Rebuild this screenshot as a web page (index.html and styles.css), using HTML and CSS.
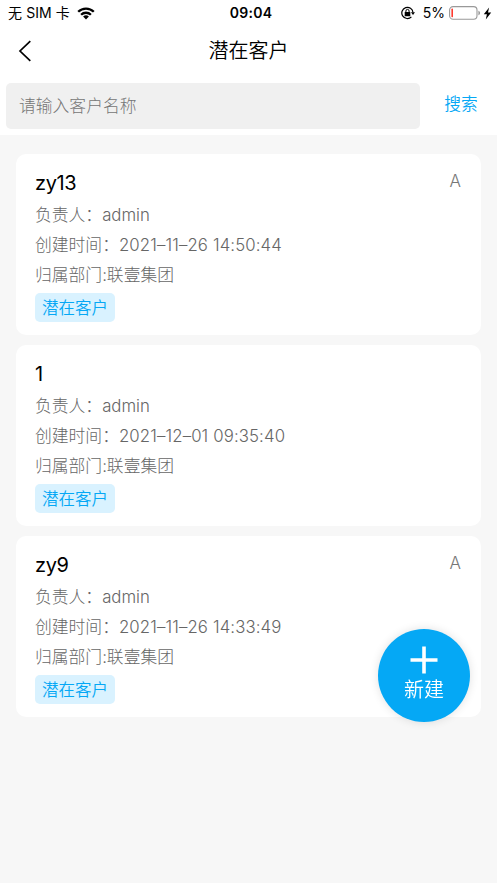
FILE: index.html
```html
<!DOCTYPE html>
<html lang="zh-CN">
  <head>
    <meta charset="UTF-8" />
    <meta name="viewport" content="width=device-width, initial-scale=1.0" />
    <title>潜在客户</title>
    <link rel="stylesheet" href="styles.css">
  </head>
  <body>
    <header class="top">
      <div class="status-bar">
        <div class="status-left">
          <span>无 SIM 卡</span>
          <svg class="wifi" width="18" height="13" viewBox="0 0 18 13">
            <path d="M1.2 4.8a11 11 0 0 1 15.6 0M4.1 7.8a6.9 6.9 0 0 1 9.8 0" fill="none" stroke="#000" stroke-width="2.3" />
            <path d="M9 12.5 6.1 9.6a4.1 4.1 0 0 1 5.8 0z" />
          </svg>
        </div>
        <div class="status-time">09:04</div>
        <div class="status-right">
          <svg width="14" height="14" viewBox="0 0 14 14">
            <path d="M10.4 10.9A5.6 5.6 0 1 1 12 6.5" fill="none" stroke="#000" stroke-width="1.2" />
            <path d="M9.9 6.2h4.1l-2 2.8z" />
            <rect x="3.7" y="6" width="5.6" height="4.2" rx=".5" />
            <path d="M4.9 6.5V5a1.6 1.6 0 0 1 3.2 0v1.5" fill="none" stroke="#000" stroke-width="1" />
          </svg>
          <span class="percent">5%</span>
          <svg class="battery" width="32" height="14" viewBox="0 0 32 14">
            <rect x=".6" y=".6" width="27.4" height="12.6" rx="3.5" fill="none" stroke="#999" stroke-width="1.1" />
            <rect x="2.4" y="2.6" width="1.6" height="8.6" rx=".6" fill="#ff3b30" />
            <path d="M29.4 4.7c2.2.7 2.2 3.8 0 4.5z" fill="#999" />
          </svg>
          <svg width="9" height="13" viewBox="0 0 9 13">
            <path d="M6.1.4.8 7.2h3.1l-1.1 5.4 5.4-7H5z" />
          </svg>
        </div>
      </div>

      <nav class="nav-bar">
        <svg class="back" width="14" height="22" viewBox="0 0 14 22">
          <path d="M12.3 1.2 2 11l10.3 9.8" fill="none" stroke="#000" stroke-width="1.7" />
        </svg>
        <h1>潜在客户</h1>
      </nav>

      <div class="search-bar">
        <input class="search-input" type="text" placeholder="请输入客户名称" />
        <a class="search-btn">搜索</a>
      </div>
    </header>

    <main class="list">
      <section class="card">
        <div class="card-header">
          <h2>zy13</h2>
          <span class="level">A</span>
        </div>
        <p>负责人：<span class="value">admin</span></p>
        <p>创建时间：<span class="value date">2021–11–26 14:50:44</span></p>
        <p>归属部门:联壹集团</p>
        <span class="tag">潜在客户</span>
      </section>

      <section class="card">
        <div class="card-header">
          <h2>1</h2>
        </div>
        <p>负责人：<span class="value">admin</span></p>
        <p>创建时间：<span class="value date">2021–12–01 09:35:40</span></p>
        <p>归属部门:联壹集团</p>
        <span class="tag">潜在客户</span>
      </section>

      <section class="card">
        <div class="card-header">
          <h2>zy9</h2>
          <span class="level">A</span>
        </div>
        <p>负责人：<span class="value">admin</span></p>
        <p>创建时间：<span class="value date">2021–11–26 14:33:49</span></p>
        <p>归属部门:联壹集团</p>
        <span class="tag">潜在客户</span>
      </section>
    </main>

    <button class="add-btn">
      <svg width="28" height="28" viewBox="0 0 28 28">
        <path d="M14 .5v27M.5 14h27" stroke="#fff" stroke-width="3.6" />
      </svg>
      <span>新建</span>
    </button>
  </body>
</html>
```
FILE: styles.css
```css
* {
  box-sizing: border-box;
}
body {
  margin: 0;
  min-height: 883px;
  background: #f7f7f7;
  color: #000;
  font-family: Inter, "Noto Sans CJK SC", sans-serif;
  font-weight: 300;
}
.top {
  height: 135px;
  background: #fff;
}
.status-bar {
  display: grid;
  grid-template-columns: 1fr auto 1fr;
  align-items: center;
  height: 26px;
  padding: 0 5px 0 8px;
  font-size: 14px;
  font-weight: 400;
  line-height: 26px;
}
.status-left,
.status-right {
  display: flex;
  align-items: center;
}
.status-left {
  white-space: nowrap;
  letter-spacing: 0.1px;
}
.wifi {
  margin-left: 7px;
}
.status-time {
  padding-left: 2px;
  font-weight: 600;
  letter-spacing: 0.3px;
}
.status-right {
  justify-content: flex-end;
}
.percent {
  margin: 0 4px 0 8px;
}
.battery {
  margin-right: 2px;
}
.nav-bar {
  display: grid;
  grid-template-columns: 60px 1fr 60px;
  align-items: center;
  height: 50px;
}
.back {
  margin-left: 18px;
}
h1 {
  margin: 0;
  font-size: 20px;
  font-weight: 350;
  line-height: 50px;
  text-align: center;
}
.search-bar {
  display: flex;
  padding: 7px 0 0 6px;
}
.search-input {
  width: 414px;
  height: 46px;
  padding: 0 13px;
  border: none;
  border-radius: 5px;
  background: #f0f0f0;
  font: inherit;
  font-size: 16.8px;
}
.search-input::placeholder {
  color: #757575;
}
.search-btn {
  flex: 1;
  color: #05a8f5;
  font-size: 16.7px;
  font-weight: 350;
  line-height: 42px;
  text-align: center;
  padding-left: 5px;
}
.list {
  display: flex;
  flex-direction: column;
  gap: 10px;
  padding: 19px 16px;
}
.card {
  height: 181px;
  padding: 16px 19px;
  border-radius: 10px;
  background: #fff;
}
.card-header {
  display: flex;
  justify-content: space-between;
  height: 31px;
}
h2 {
  margin: 0;
  font-size: 20px;
  font-weight: 400;
  line-height: 27px;
  letter-spacing: -0.4px;
}
.level {
  color: #777;
  font-size: 17px;
  line-height: 22px;
  margin-right: 1px;
}
.card p {
  height: 30px;
  margin: 0;
  color: #666;
  font-size: 16.8px;
  line-height: 29px;
  white-space: nowrap;
}
.date {
  letter-spacing: 0.12px;
}
.tag {
  display: block;
  width: 80px;
  height: 29px;
  margin-top: 2px;
  border-radius: 5px;
  background: #d9f2ff;
  color: #05a8f5;
  font-size: 16.5px;
  font-weight: 350;
  line-height: 30px;
  text-align: center;
}
.add-btn {
  position: fixed;
  top: 629px;
  left: 378px;
  display: flex;
  flex-direction: column;
  align-items: center;
  width: 92px;
  height: 93px;
  padding: 17px 0 0;
  border: none;
  border-radius: 50%;
  background: #05a8f5;
  box-shadow: 0 0 10px rgba(0, 0, 0, 0.12);
  color: #fff;
  font: inherit;
  font-size: 20px;
  font-weight: 350;
  line-height: 32px;
}
```
